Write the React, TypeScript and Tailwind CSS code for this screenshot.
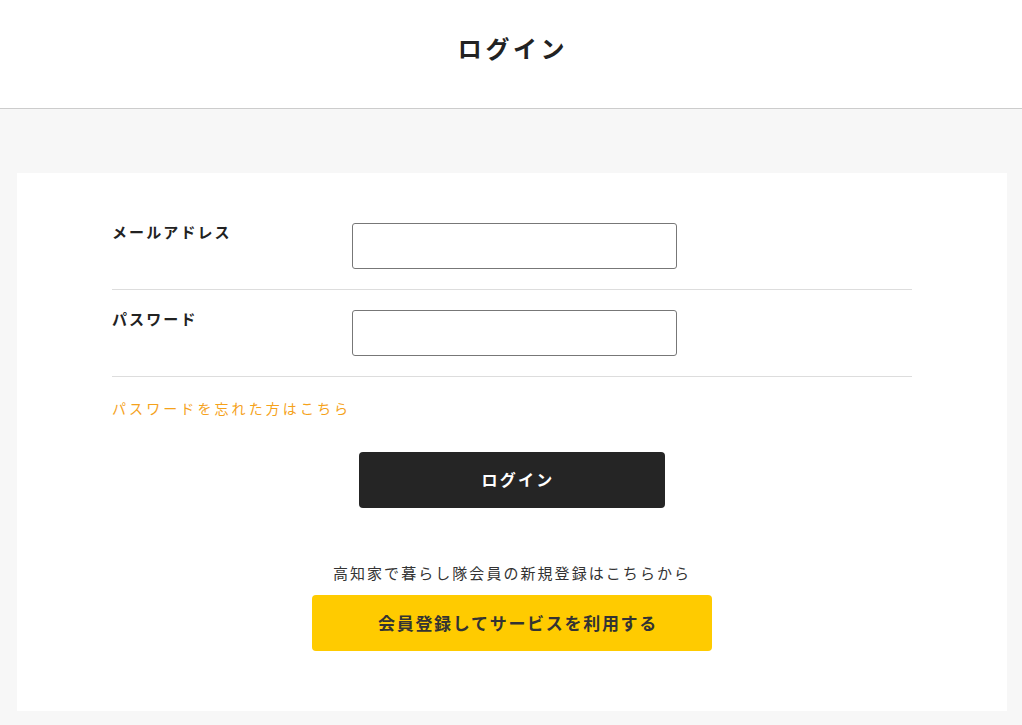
export default function App() {
  const font = { fontFamily: '"Noto Sans CJK JP", "Noto Sans", sans-serif' };
  return (
    <div className="min-h-[725px] bg-[#f7f7f7] text-[#222]" style={font}>
      <header className="h-[109px] bg-white border-b border-[#cccccc] flex items-center justify-center">
        <h1 className="text-[24px] font-bold tracking-[0.15em] pb-[13px] pl-[4px]">ログイン</h1>
      </header>
      <div className="pt-[64px] pl-[17px] pr-[15px] pb-[14px]">
        <div className="bg-white pt-[30px] pb-[60px]">
          <div className="w-[800px] mx-auto">
            <div className="flex py-5 border-b border-[#dddddd]">
              <label className="w-[240px] text-[15px] font-bold tracking-[0.14em] leading-[20px] -mt-[1px]">メールアドレス</label>
              <input className="w-[325px] h-[46px] border border-[#777] rounded-[3px] px-2" />
            </div>
            <div className="flex py-5 border-b border-[#dddddd]">
              <label className="w-[240px] text-[15px] font-bold tracking-[0.14em] leading-[20px] -mt-[1px]">パスワード</label>
              <input type="password" className="w-[325px] h-[46px] border border-[#777] rounded-[3px] px-2" />
            </div>
            <div className="pt-[18px]">
              <a className="text-[14px] text-[#f5a21b] tracking-[0.22em] leading-[20px]">パスワードを忘れた方はこちら</a>
            </div>
            <div className="flex justify-center pt-[33px]">
              <button className="w-[306px] h-[56px] bg-[#252525] text-white rounded-[4px] text-[16px] font-bold tracking-[0.14em] pl-[12px] pb-[3px]">ログイン</button>
            </div>
            <p className="text-center text-[15px] tracking-[0.137em] leading-[20px] mt-[55px] text-[#333]">高知家で暮らし隊会員の新規登録はこちらから</p>
            <div className="flex justify-center mt-[12px]">
              <button className="w-[400px] h-[56px] bg-[#ffcb00] text-[#333] rounded-[4px] text-[17px] font-bold tracking-[0.1em] pl-[12px]">会員登録してサービスを利用する</button>
            </div>
          </div>
        </div>
      </div>
    </div>
  );
}
